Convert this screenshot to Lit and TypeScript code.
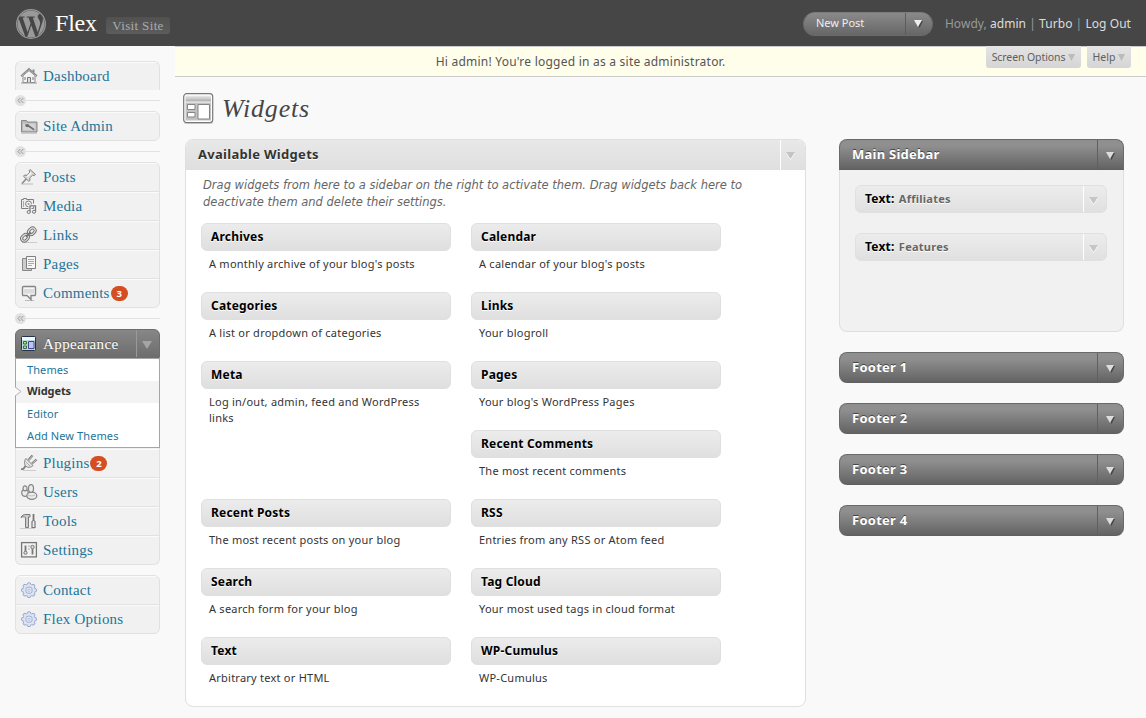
import { LitElement, html, svg, css, nothing } from "lit";
import { customElement, property } from "lit/decorators.js";
import { classMap } from "lit/directives/class-map.js";

type IconName =
  | "home" | "key" | "pin" | "media" | "link" | "pages" | "comment"
  | "theme" | "plug" | "users" | "tools" | "settings" | "gear";

const icons: Record<IconName, unknown> = {
  home: svg`<path d="M3 8.5V15.5H15V8.5L9 3.5z" fill="#f4f4f4" stroke="#8a8a8a"/><path d="M1.2 9.300 9 2.300l7.800 7" fill="none" stroke="#8a8a8a" stroke-width="2.200"/><path d="M1.800 9.200 9 2.700l7.200 6.500" fill="none" stroke="#e6e6e6" stroke-width=".800" stroke-dasharray="1 1"/><path d="M13.500 5.500V2.500" stroke="#8a8a8a" stroke-width="2"/><path d="M7.500 15.500v-5h3v5M5 10v3M13 10v3" fill="#ddd" stroke="#777"/><path d="M1 16h16" stroke="#999"/>`,
  key: svg`<path d="M1.500 3.500h5l1 1.500h9.500v10H1.500z" fill="#b9b9b9" stroke="#888"/><path d="M3 6.500h12.500v7H3z" fill="#d4d4d4"/><path d="M5 7.500l3-.500 1.500 1.500 5 3.500-.500 1.500-5.500-3.500-2.500 0z" fill="#6d6d6d"/><path d="M1 16.500h16" stroke="#ccc"/>`,
  pin: svg`<path d="M1 16h12" stroke="#bbb"/><path d="M2 15.500 7 10" stroke="#888" stroke-width="1.500"/><path d="M10 1.500l5.500 5-1.500 1-1.300-.400-3 2.800.300 2.600-1.200.800-5.300-5 1-1.200 2.600.200 2.700-3.100-.700-1.500z" fill="#dcdcdc" stroke="#808080"/><path d="M7.500 8.500l3.500-3.800" stroke="#fff" stroke-width="1.200"/>`,
  media: svg`<path d="M1.500 2.500h2v-1h3v1h7v9h-12z" fill="#eee" stroke="#7f7f7f"/><path d="M3.500 4v6" stroke="#aaa"/><circle cx="8.500" cy="6.900" r="2.900" fill="#fff" stroke="#777"/><circle cx="8.500" cy="6.900" r="1.100" fill="#999"/><path d="M10 14V9.500l5.500-2v6.500" fill="none" stroke="#f4f4f4" stroke-width="3"/><path d="M10 15V8.800h5.500V14.500" fill="none" stroke="#777" stroke-width="1.300"/><ellipse cx="8.700" cy="15" rx="1.600" ry="1.500" fill="#eee" stroke="#777"/><ellipse cx="14" cy="14.800" rx="1.600" ry="1.500" fill="#eee" stroke="#777"/>`,
  link: svg`<path d="M2 16.500h15" stroke="#ccc"/><g fill="none"><rect x="-2.600" y="-3.600" width="5.200" height="7.200" rx="2.600" transform="translate(11.800 5.300) rotate(45)" stroke="#757575" stroke-width="3"/><rect x="-2.600" y="-3.600" width="5.200" height="7.200" rx="2.600" transform="translate(5 11.800) rotate(45)" stroke="#757575" stroke-width="3"/><rect x="-2.600" y="-3.600" width="5.200" height="7.200" rx="2.600" transform="translate(11.800 5.300) rotate(45)" stroke="#e2e2e2" stroke-width="1.100"/><rect x="-2.600" y="-3.600" width="5.200" height="7.200" rx="2.600" transform="translate(5 11.800) rotate(45)" stroke="#e2e2e2" stroke-width="1.100"/><path d="M6 10.800l4.800-4.600" stroke="#757575" stroke-width="2"/></g>`,
  pages: svg`<path d="M2.500 3.500h6v12h-6z" fill="#ccc" stroke="#888"/><path d="M3.500 15.500h8v-2" fill="#ccc" stroke="#888"/><path d="M6.500 1.500h9v12h-9z" fill="#f7f7f7" stroke="#7f7f7f"/><path d="M8 4.500h6M8 6.500h6M8 8.500h6M8 10.500h4" stroke="#aaa"/>`,
  comment: svg`<path d="M5 16.500h9" stroke="#bbb"/><path d="M3.500 2.500h11a1 1 0 0 1 1 1v7a1 1 0 0 1-1 1h-3.500v4l-4-4h-3.500a1 1 0 0 1-1-1v-7a1 1 0 0 1 1-1z" fill="#f6f6f6" stroke="#858585" stroke-width="1.400"/><path d="M4 5h10v4.500H4z" fill="#dcdcdc"/>`,
  theme: svg`<rect x="1.500" y="1.500" width="14" height="14" rx="1" fill="#b7dcdc" stroke="#25304f"/><path d="M2 2h13v3H2z" fill="#f3f8ff"/><path d="M3.500 6.500h3v2.500h-3zM3.500 11h3v2.500h-3z" fill="#b6e08a" stroke="#3a6a45"/><path d="M8.500 6.500h5.500v7H8.500z" fill="#c3c4f5" stroke="#3f4688"/>`,
  plug: svg`<path d="M3 16.500h13" stroke="#ccc"/><path d="M1 15c3 1 3-1.500 4.500-3" fill="none" stroke="#808080" stroke-width="1.800"/><path d="M6 4.500l7 7c-2 2-5 2.500-7 .700s-2-5.500 0-7.700z" fill="#e5e5e5" stroke="#7c7c7c"/><path d="M8.500 6l4-4.500M12 9.500l4.500-4" stroke="#777" stroke-width="2.200"/><path d="M8.800 6l3.600-4M12.300 9.300l4-3.600" stroke="#ddd" stroke-width=".800"/><path d="M5.500 7.500l5 5" stroke="#aaa"/>`,
  users: svg`<g fill="#ececec" stroke="#858585" stroke-width="1.200"><ellipse cx="5" cy="10" rx="3.300" ry="3.400"/><ellipse cx="5" cy="5.300" rx="2" ry="2.500"/><ellipse cx="11.800" cy="12.700" rx="5" ry="3.600"/><ellipse cx="11" cy="5.500" rx="2.500" ry="3.900"/></g><path d="M8 12c2 1.200 5 1.200 7 0" stroke="#bbb" fill="none"/>`,
  tools: svg`<path d="M0 16.500h15" stroke="#ccc"/><path d="M1 5.500c1-2.500 3-3 5-3h4v2.500H8.500v10.500h-3V5.500C4 4.500 2.500 4.500 1 5.500z" fill="#ccc" stroke="#7a7a7a"/><path d="M13.500 2v6" stroke="#777" stroke-width="1.800"/><path d="M12 9.500q1.500-2 3 0v6h-3z" fill="#eee" stroke="#777" stroke-width="1.200"/>`,
  settings: svg`<rect x="1.600" y="1.600" width="14.800" height="14.300" fill="#f2f2f2" stroke="#777" stroke-width="1.300"/><path d="M5.500 4.500v6M12.500 8v5.500" stroke="#777" stroke-width="1.800"/><circle cx="5.500" cy="11.800" r="1.600" fill="#ddd" stroke="#777"/><circle cx="12.500" cy="6" r="1.700" fill="#ddd" stroke="#777"/><path d="M8 5h2M8 8h2" stroke="#aaa"/>`,
  gear: svg`<g fill="#d6dff0" stroke="#9aabcf"><circle cx="9" cy="3.600" r="1.900"/><circle cx="13" cy="5.200" r="1.900"/><circle cx="14.700" cy="9.200" r="1.900"/><circle cx="13" cy="13.200" r="1.900"/><circle cx="9" cy="14.800" r="1.900"/><circle cx="5" cy="13.200" r="1.900"/><circle cx="3.300" cy="9.200" r="1.900"/><circle cx="5" cy="5.200" r="1.900"/></g><circle cx="9" cy="9.200" r="5.600" fill="#dde4f4"/><rect x="6" y="6.200" width="6" height="6" rx="2" fill="#eef1fb" stroke="#9dabd2"/><rect x="8" y="8.200" width="2" height="2" fill="#fff" stroke="#aab6d8" stroke-width=".800"/>`,
};

interface MenuItem {
  label: string;
  icon: IconName;
  count?: number;
}

@customElement("wp-menu-item")
export class WpMenuItem extends LitElement {
  @property({ attribute: false }) item!: MenuItem;

  static styles = css`
    :host { display: block; height: 29px; box-sizing: border-box; border-top: 1px solid #fbfbfb; }
    .row { display: flex; align-items: center; height: 26px; padding-left: 4px; }
    .icon { width: 18px; height: 18px; flex: none; margin-right: 5px; }
    .label { font: 15px/20px "Liberation Serif", serif; letter-spacing: 0.2px; color: #21759b; white-space: nowrap; padding-bottom: 1px; }
    .count {
      margin-left: 1px; min-width: 17px; height: 15px; border-radius: 8px; background: #d54e21; color: #fff;
      font: bold 9.500px/15px "Open Sans", sans-serif; text-align: center;
    }
  `;

  render() {
    const { label, icon, count } = this.item;
    return html`<div class="row">
      <svg class="icon" viewBox="0 0 18 18">${icons[icon]}</svg>
      <span class="label">${label}</span>
      ${count ? html`<span class="count">${count}</span>` : nothing}
    </div>`;
  }
}

@customElement("wp-admin-menu")
export class WpAdminMenu extends LitElement {
  static styles = css`
    :host { display: block; width: 145px; }
    .group { box-sizing: border-box; border: 1px solid #e1e1e1; border-radius: 6px; background: #f1f1f1; overflow: hidden; }
    .group > wp-menu-item + wp-menu-item { box-shadow: 0 -1px #e1e1e1; }
    .group > wp-menu-item:last-child { height: 28px; }
    .open { border-bottom: 0; border-radius: 6px 6px 0 0; height: 29px; }
    .joined { border-top: 0; border-radius: 0 0 6px 6px; padding-top: 1px; }
    .last { margin-top: 10px; }
    .sep { display: flex; align-items: center; height: 11px; margin: 5px 0; }
    .knob { width: 11px; height: 11px; flex: none; }
    .rule { flex: 1; height: 1px; background: #e1e1e1; }
    .current {
      display: flex; align-items: center; height: 29px; border-radius: 6px 6px 0 0; box-sizing: border-box;
      background: linear-gradient(#878787, #6d6d6d); border: 1px solid #6d6d6d; padding-left: 4px;
    }
    .current-icon { width: 18px; height: 18px; margin-right: 5px; }
    .current-label { flex: 1; font: 15px/20px "Liberation Serif", serif; letter-spacing: 0.4px; color: #fff; text-shadow: 0 -1px 0 #555; }
    .current-toggle { width: 22px; height: 27px; border-left: 1px solid #999; display: flex; align-items: center; justify-content: center; }
    .tri { width: 10px; height: 8px; margin-top: 3px; margin-right: 2px; }
    .sub { background: #fff; border: 1px solid #a5a5a5; }
    .entry {
      display: flex; align-items: center; height: 22px; padding-left: 11px;
      font: 11px/22px "Noto Sans", sans-serif; letter-spacing: 0.1px; color: #21759b;
    }
    .here { position: relative; background: #f3f3f3; color: #333; font-weight: 700; letter-spacing: -0.1px; }
    .here-label { padding-bottom: 2px; }
    .notch { position: absolute; left: -1px; top: 6px; width: 7px; height: 9px; }
  `;

  private group(items: MenuItem[], cls: Record<string, boolean> = {}) {
    return html`<div class=${classMap({ group: true, ...cls })}>
      ${items.map((i) => html`<wp-menu-item .item=${i}></wp-menu-item>`)}
    </div>`;
  }

  private separator() {
    return html`<div class="sep">
      <svg class="knob" viewBox="0 0 11 11">
        <circle cx="5.500" cy="5.500" r="5.500" fill="#e1e1e1" />
        <path d="M5.300 3 3 5.500 5.300 8M8.300 3 6 5.500 8.300 8" fill="none" stroke="#999" />
      </svg>
      <span class="rule"></span>
    </div>`;
  }

  render() {
    return html`
      ${this.group([{ label: "Dashboard", icon: "home" }], { open: true })}
      ${this.separator()}
      ${this.group([{ label: "Site Admin", icon: "key" }])}
      ${this.separator()}
      ${this.group([
        { label: "Posts", icon: "pin" },
        { label: "Media", icon: "media" },
        { label: "Links", icon: "link" },
        { label: "Pages", icon: "pages" },
        { label: "Comments", icon: "comment", count: 3 },
      ])}
      ${this.separator()}
      <div class="current">
        <svg class="current-icon" viewBox="0 0 18 18">${icons.theme}</svg>
        <span class="current-label">Appearance</span>
        <span class="current-toggle">
          <svg class="tri" viewBox="0 0 10 8"><path d="M0 0h10L5 8z" fill="#a5a5a5" /></svg>
        </span>
      </div>
      <div class="sub">
        <div class="entry">Themes</div>
        <div class="entry here">
          <svg class="notch" viewBox="0 0 7 9"><path d="M0 0l6 4.500L0 9" fill="#f9f9f9" stroke="#b5b5b5" /></svg>
          <span class="here-label">Widgets</span>
        </div>
        <div class="entry">Editor</div>
        <div class="entry">Add New Themes</div>
      </div>
      ${this.group(
        [
          { label: "Plugins", icon: "plug", count: 2 },
          { label: "Users", icon: "users" },
          { label: "Tools", icon: "tools" },
          { label: "Settings", icon: "settings" },
        ],
        { joined: true },
      )}
      ${this.group(
        [
          { label: "Contact", icon: "gear" },
          { label: "Flex Options", icon: "gear" },
        ],
        { last: true },
      )}
    `;
  }
}

@customElement("wp-header")
export class WpHeader extends LitElement {
  static styles = css`
    :host {
      display: flex; align-items: center; height: 46px; box-sizing: border-box; background: #464646;
      padding: 1px 15px 0 16px; font: 13px/18px "Noto Sans", sans-serif; color: #ccc;
    }
    .logo { width: 30px; height: 30px; margin-right: 9px; margin-top: 1px; }
    .title { font: 24px/30px "Liberation Serif", serif; color: #fff; width: 51px; letter-spacing: -0.2px; padding-bottom: 1px; }
    .visit {
      width: 64px; height: 17px; margin-top: 4px; border-radius: 3px; background: linear-gradient(#515151, #5c5c5c);
      font: 13px/18px "Liberation Serif", serif; letter-spacing: 0.35px; color: #aaa; text-align: center;
    }
    .spacer { flex: 1; }
    .new {
      display: flex; align-items: center; width: 130px; height: 24px; border-radius: 12px; box-sizing: border-box;
      background: linear-gradient(#8a8a8a, #666); border: 1px solid #6b6b6b; border-top-color: #7d7d7d; margin-right: 12px;
    }
    .new-label { flex: 1; padding: 0 0 1px 12px; font-size: 11px; letter-spacing: 0; color: #eee; }
    .new-toggle { width: 26px; height: 22px; border-left: 1px solid #5c5c5c; display: flex; align-items: center; }
    .tri { width: 9px; height: 8px; margin: 1px 0 0 8px; }
    .user { font-size: 12px; letter-spacing: 0.05px; color: #999; white-space: nowrap; }
    .link { color: #ddd; }
  `;

  render() {
    return html`
      <svg class="logo" viewBox="0 0 24 24">
        <path fill="#999" d="M21.469 6.825c.84 1.537 1.318 3.3 1.318 5.175 0 3.979-2.156 7.456-5.363 9.325l3.295-9.527c.615-1.54.82-2.771.82-3.864 0-.405-.026-.78-.07-1.11m-7.981.105c.647-.03 1.232-.105 1.232-.105.582-.075.514-.93-.067-.899 0 0-1.755.135-2.88.135-1.064 0-2.85-.15-2.85-.15-.585-.03-.661.855-.075.885 0 0 .54.061 1.125.09l1.68 4.605-2.37 7.08L5.354 6.9c.649-.03 1.234-.1 1.234-.1.585-.075.516-.93-.065-.896 0 0-1.746.138-2.874.138-.2 0-.438-.008-.69-.015C4.911 3.15 8.235 1.215 12 1.215c2.809 0 5.365 1.072 7.286 2.833-.046-.003-.091-.009-.141-.009-1.06 0-1.812.923-1.812 1.914 0 .89.513 1.643 1.06 2.531.411.72.89 1.643.89 2.977 0 .915-.354 1.994-.821 3.479l-1.075 3.585-3.9-11.61.001.014zM12 22.784c-1.059 0-2.081-.153-3.048-.437l3.237-9.406 3.315 9.087c.024.053.05.101.078.149-1.12.393-2.325.609-3.582.609M1.211 12c0-1.564.336-3.05.935-4.39L7.29 21.709C3.694 19.96 1.212 16.271 1.211 12" />
        <circle cx="12" cy="12" r="11.500" fill="none" stroke="#999" stroke-width="1" />
      </svg>
      <span class="title">Flex</span>
      <span class="visit">Visit Site</span>
      <span class="spacer"></span>
      <div class="new">
        <span class="new-label">New Post</span>
        <span class="new-toggle">
          <svg class="tri" viewBox="0 0 9 8"><path d="M1.500 1h7.500L5.500 8z" fill="#444" /><path d="M0 0h8L4 7z" fill="#eee" /></svg>
        </span>
      </div>
      <span class="user">Howdy, <span class="link">admin</span> | <span class="link">Turbo</span> | <span class="link">Log Out</span></span>
    `;
  }
}

@customElement("wp-widget")
export class WpWidget extends LitElement {
  @property() name = "";
  @property() note = "";
  @property() detail = "";
  @property({ type: Boolean }) placed = false;

  static styles = css`
    :host { display: block; font-family: "Noto Sans", sans-serif; }
    .bar {
      display: flex; align-items: center; height: 28px; box-sizing: border-box; border: 1px solid #dfdfdf;
      border-radius: 6px; background: linear-gradient(#ececec, #dfdfdf); padding-left: 9px; color: #000;
    }
    .placed { border-color: #e0e0e0; background: linear-gradient(#ececec, #e0e0e0); }
    .name { flex: 1; font-size: 12px; line-height: 18px; font-weight: 700; letter-spacing: 0.2px; text-shadow: 0 1px 0 #fff; white-space: nowrap; }
    .detail { font-size: 11px; color: #666; letter-spacing: 0.25px; margin-left: 1px; }
    .toggle { width: 22px; height: 26px; border-left: 1px solid #fff; display: flex; align-items: center; justify-content: center; }
    .tri { width: 9px; height: 8px; margin-top: 3px; margin-right: 4px; }
    .note { margin: 5px 8px 0; width: 225px; font-size: 11px; line-height: 16px; letter-spacing: 0.24px; color: #333; }
  `;

  render() {
    return html`
      <div class=${classMap({ bar: true, placed: this.placed })}>
        <span class="name">${this.name}${this.detail ? html`: <span class="detail">${this.detail}</span>` : nothing}</span>
        ${this.placed
          ? html`<span class="toggle"><svg class="tri" viewBox="0 0 9 8"><path d="M0 1h9L4.500 8z" fill="#fff" /><path d="M0 0h9L4.500 7z" fill="#c6c6c6" /></svg></span>`
          : nothing}
      </div>
      ${this.note ? html`<div class="note">${this.note}</div>` : nothing}
    `;
  }
}

@customElement("wp-sidebar-panel")
export class WpSidebarPanel extends LitElement {
  @property() name = "";
  @property({ attribute: false }) widgets: string[] | null = null;

  static styles = css`
    :host { display: block; }
    .head {
      display: flex; align-items: center; height: 31px; box-sizing: border-box; padding-left: 12px;
      background: linear-gradient(#8f8f8f 20%, #636363); border: 1px solid #6a6a6a; border-bottom-color: #606060; border-radius: 8px;
      font: bold 13px/20px "Noto Sans", sans-serif; color: #fff; text-shadow: 0 -1px 0 #444;
    }
    .expanded { border-radius: 8px 8px 0 0; }
    .name { flex: 1; letter-spacing: 0.25px; padding-bottom: 2px; }
    .toggle { width: 25px; height: 29px; border-left: 1px solid #606060; display: flex; align-items: center; justify-content: center; }
    .tri { width: 9px; height: 8px; margin-top: 2px; margin-right: 1px; }
    .body {
      box-sizing: border-box; height: 162px; border: 1px solid #dfdfdf; border-top: 0; border-radius: 0 0 8px 8px;
      background: #f1f1f1; padding: 15px 16px 0 15px; display: flex; flex-direction: column; gap: 20px;
    }
  `;

  render() {
    return html`
      <div class=${classMap({ head: true, expanded: !!this.widgets })}>
        <span class="name">${this.name}</span>
        <span class="toggle"><svg class="tri" viewBox="0 0 9 8"><path d="M2 1h7L5.500 8z" fill="#444" /><path d="M0 0h8L4 7z" fill="#ddd" /></svg></span>
      </div>
      ${this.widgets
        ? html`<div class="body">${this.widgets.map((w) => html`<wp-widget placed name="Text" detail=${w}></wp-widget>`)}</div>`
        : nothing}
    `;
  }
}

const AVAILABLE: ([string, string] | null)[] = [
  ["Archives", "A monthly archive of your blog's posts"],
  ["Calendar", "A calendar of your blog's posts"],
  ["Categories", "A list or dropdown of categories"],
  ["Links", "Your blogroll"],
  ["Meta", "Log in/out, admin, feed and WordPress links"],
  ["Pages", "Your blog's WordPress Pages"],
  null,
  ["Recent Comments", "The most recent comments"],
  ["Recent Posts", "The most recent posts on your blog"],
  ["RSS", "Entries from any RSS or Atom feed"],
  ["Search", "A search form for your blog"],
  ["Tag Cloud", "Your most used tags in cloud format"],
  ["Text", "Arbitrary text or HTML"],
  ["WP-Cumulus", "WP-Cumulus"],
];

@customElement("app-root")
export class AppRoot extends LitElement {
  static styles = css`
    :host { display: block; height: 718px; overflow: hidden; background: #f9f9f9; font-family: "Noto Sans", sans-serif; }
    .layout { display: flex; }
    .side { width: 175px; flex: none; box-sizing: border-box; padding: 15px 0 0 15px; }
    .main { flex: 1; min-width: 0; }
    .notice {
      display: flex; align-items: flex-start; height: 31px; box-sizing: border-box; position: relative;
      border: 1px solid #ccc; border-width: 1px 0; background: #fffeeb;
    }
    .message { width: 811px; text-align: center; font-size: 12px; line-height: 29px; letter-spacing: 0.23px; color: #555; }
    .tabs { position: absolute; right: 15px; top: -1px; display: flex; gap: 6px; }
    .tab {
      display: flex; align-items: center; justify-content: center; gap: 3px; height: 22px; box-sizing: border-box;
      background: linear-gradient(#e4e4e4, #d5d5d5); border-radius: 0 0 3px 3px; font-size: 10.500px; color: #606060; white-space: nowrap;
    }
    .wide { width: 95px; letter-spacing: -0.1px; }
    .small { width: 44px; }
    .tab-tri { width: 7px; height: 7px; margin-top: 1px; }
    .heading { display: flex; align-items: center; height: 31px; margin: 16px 0 0 8px; }
    .heading-icon { width: 31px; height: 31px; }
    .heading-text { margin-left: 8px; font: italic 26px/30px "Liberation Serif", serif; letter-spacing: 0.8px; color: #464646; }
    .columns { display: flex; align-items: flex-start; margin: 15px 22px 0 10px; justify-content: space-between; }
    .available {
      width: 621px; height: 568px; box-sizing: border-box; border: 1px solid #dfdfdf; border-radius: 8px; background: #fff; overflow: hidden;
    }
    .available-head { display: flex; align-items: center; height: 30px; background: linear-gradient(#e8e8e8, #dfdfdf); padding-left: 12px; }
    .available-title { flex: 1; font-size: 13px; font-weight: 700; letter-spacing: 0.3px; color: #333; text-shadow: 0 1px 0 #fff; padding-bottom: 2px; }
    .available-toggle { width: 24px; height: 30px; border-left: 1px solid #fff; display: flex; align-items: center; }
    .tri { width: 9px; height: 8px; margin: 2px 0 0 5px; }
    .intro {
      margin: 7px 0 12px 17px; width: 590px; font: oblique 11.500px/17px "DejaVu Sans", sans-serif; color: #666; white-space: nowrap;
    }
    .grid { display: grid; grid-template-columns: 250px 250px; grid-auto-rows: 69px; column-gap: 20px; margin-left: 15px; }
    .panels { display: flex; flex-direction: column; gap: 20px; width: 285px; }
  `;

  private tabArrow() {
    return html`<svg class="tab-tri" viewBox="0 0 7 7"><path d="M0 0h7L3.500 7z" fill="#bbb" /></svg>`;
  }

  render() {
    return html`
      <wp-header></wp-header>
      <div class="layout">
        <div class="side"><wp-admin-menu></wp-admin-menu></div>
        <div class="main">
          <div class="notice">
            <span class="message">Hi admin! You're logged in as a site administrator.</span>
            <div class="tabs">
              <span class="tab wide">Screen Options${this.tabArrow()}</span>
              <span class="tab small">Help${this.tabArrow()}</span>
            </div>
          </div>
          <div class="heading">
            <svg class="heading-icon" viewBox="0 0 31 31">
              <defs><linearGradient id="hd" x2="0" y2="1"><stop stop-color="#eee" /><stop offset="1" stop-color="#aaa" /></linearGradient></defs>
              <path d="M1 30.500h29" stroke="#ddd" />
              <rect x=".700" y=".700" width="29" height="29" rx="3" fill="#fff" stroke="#777" stroke-width="1.200" />
              <rect x="2.500" y="2.500" width="25.500" height="6" fill="url(#hd)" />
              <rect x="2.500" y="9.500" width="25.500" height="18" fill="#c2c2c2" />
              <path d="M4.500 11.500h7.500v5h-7.500zM4.500 19.500h7.500v4.500h-7.500zM15 11.500h11.500v14.500h-11.500z" fill="#fff" stroke="#858585" />
            </svg>
            <span class="heading-text">Widgets</span>
          </div>
          <div class="columns">
            <section class="available">
              <div class="available-head">
                <span class="available-title">Available Widgets</span>
                <span class="available-toggle">
                  <svg class="tri" viewBox="0 0 9 8"><path d="M0 1h9L4.500 8z" fill="#fff" /><path d="M0 0h9L4.500 7z" fill="#c4c4c4" /></svg>
                </span>
              </div>
              <div class="intro">
                Drag widgets from here to a sidebar on the right to activate them. Drag widgets back here to<br />deactivate them and delete their settings.
              </div>
              <div class="grid">
                ${AVAILABLE.map((w) => (w ? html`<wp-widget name=${w[0]} note=${w[1]}></wp-widget>` : html`<span></span>`))}
              </div>
            </section>
            <div class="panels">
              <wp-sidebar-panel name="Main Sidebar" .widgets=${["Affiliates", "Features"]}></wp-sidebar-panel>
              ${[1, 2, 3, 4].map((n) => html`<wp-sidebar-panel name="Footer ${n}"></wp-sidebar-panel>`)}
            </div>
          </div>
        </div>
      </div>
    `;
  }
}
